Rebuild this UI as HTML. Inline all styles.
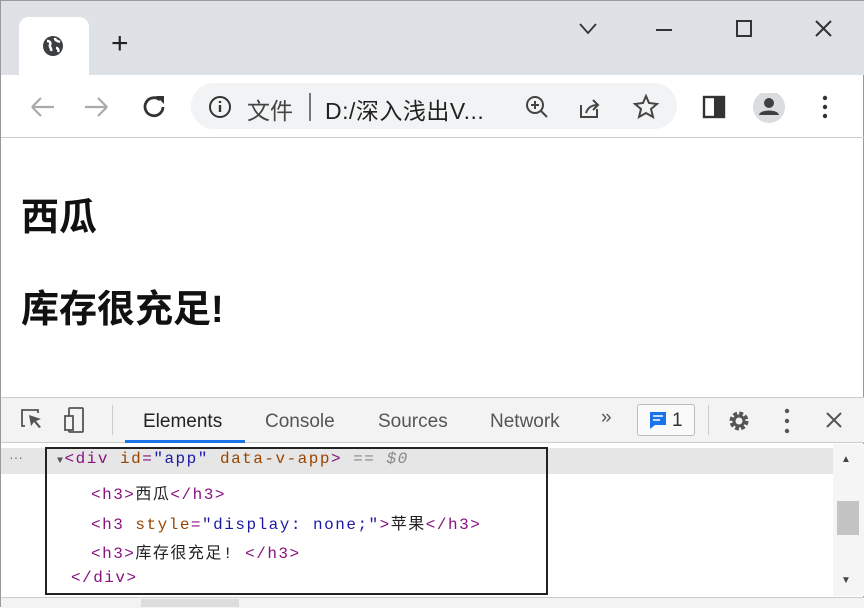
<!DOCTYPE html><html><head><meta charset="utf-8"><style>
*{margin:0;padding:0;box-sizing:border-box}
body{width:864px;height:607px;overflow:hidden;background:#fff;font-family:"Liberation Sans","Noto Sans CJK SC",sans-serif;position:relative;border:1px solid #999}
.a{position:absolute}
.m{font-family:"Liberation Mono","Noto Sans CJK SC",monospace;font-size:16px;letter-spacing:1.5px;color:#222}
.t{color:#881280}.at{color:#994500}.v{color:#1a1aa6}
.tb{font-size:19px;color:#555}
</style></head><body>
<div class="a" style="left:0;top:0;width:864px;height:74px;background:#dee1e6"></div>
<div class="a" style="left:18px;top:16px;width:70px;height:60px;background:#fff;border-radius:10px 10px 0 0"></div>
<svg class="a" style="left:40px;top:33px" width="24" height="24" viewBox="0 0 24 24"><circle cx="12" cy="12" r="10" fill="#3c4043"/><path d="M6 7c3 0 4 2 3 4s2 3 1 6M14 4c0 3 3 3 5 4M15 14c2 0 3 2 2 4" stroke="#fff" stroke-width="2.5" fill="none"/></svg>
<div class="a" style="left:110px;top:26px;font-size:30px;color:#222">+</div>
<svg class="a" style="left:576px;top:18px" width="264" height="20"><path d="M3 5l8 9 8-9" stroke="#333" stroke-width="1.8" fill="none"/><path d="M79 11h16" stroke="#333" stroke-width="2"/><rect x="160" y="2" width="14" height="15" stroke="#333" stroke-width="2" fill="none"/><path d="M239 2l15 15M254 2l-15 15" stroke="#333" stroke-width="2"/></svg>
<svg class="a" style="left:26px;top:92px" width="150" height="28"><path d="M5 14h22M5 14l9-9M5 14l9 9" stroke="#aaa" stroke-width="2.2" fill="none"/><path d="M58 14h22M80 14l-9-9M80 14l-9 9" stroke="#aaa" stroke-width="2.2" fill="none"/><path d="M133 7a9 9 0 1 0 3 7" stroke="#333" stroke-width="2.8" fill="none"/><path d="M129 3h8v8z" fill="#333"/></svg>
<div class="a" style="left:190px;top:82px;width:486px;height:46px;background:#f1f3f4;border-radius:23px"></div>
<svg class="a" style="left:207px;top:94px" width="24" height="24"><circle cx="12" cy="12" r="10" stroke="#333" stroke-width="2" fill="none"/><path d="M12 10v7M12 6v2" stroke="#333" stroke-width="2.4"/></svg>
<div class="a" style="left:246px;top:91px;font-size:23px;color:#444">文件</div>
<div class="a" style="left:308px;top:92px;width:2px;height:28px;background:#777"></div>
<div class="a" style="left:324px;top:91px;font-size:23px;color:#222;letter-spacing:0.5px">D:/深入浅出V...</div>
<svg class="a" style="left:522px;top:92px" width="140" height="28"><circle cx="12" cy="12" r="8" stroke="#444" stroke-width="2" fill="none"/><path d="M18 18l6 6M8 12h8M12 8v8" stroke="#444" stroke-width="2"/><path d="M58 12v12h16v-8M63 20c2-6 6-8 12-8M70 7l5 5-5 5" stroke="#444" stroke-width="2" fill="none"/><path d="M123 3l3 7 8 1-6 5 2 8-7-4-7 4 2-8-6-5 8-1z" stroke="#444" stroke-width="2" fill="none"/></svg>
<svg class="a" style="left:700px;top:92px" width="140" height="30"><rect x="3" y="4" width="20" height="20" stroke="#333" stroke-width="2.4" fill="none"/><rect x="13" y="4" width="10" height="20" fill="#333"/><circle cx="68" cy="14" r="16" fill="#dadce0"/><circle cx="68" cy="10" r="5" fill="#3c4043"/><path d="M58 22c1-6 19-6 20 0z" fill="#3c4043"/><circle cx="124" cy="5" r="2.2" fill="#333"/><circle cx="124" cy="14" r="2.2" fill="#333"/><circle cx="124" cy="23" r="2.2" fill="#333"/></svg>
<div class="a" style="left:0;top:136px;width:864px;height:1px;background:#ccc"></div>
<div class="a" style="left:20px;top:185px;font-size:38px;font-weight:bold;color:#111">西瓜</div>
<div class="a" style="left:20px;top:277px;font-size:38px;font-weight:bold;color:#111">库存很充足!</div>
<div class="a" style="left:0;top:396px;width:864px;height:46px;background:#f3f3f3;border-top:1px solid #ccc;border-bottom:1px solid #ccc"></div>
<svg class="a" style="left:18px;top:405px" width="80" height="28"><path d="M6 20H3V4h16v3" stroke="#555" stroke-width="1.8" fill="none"/><path d="M10 9l12 4-5 2 5 6-2 1-5-6-3 4z" fill="#555"/><rect x="50" y="2" width="14" height="24" rx="1" stroke="#555" stroke-width="1.8" fill="none"/><rect x="46" y="10" width="8" height="14" stroke="#555" stroke-width="1.8" fill="#f3f3f3"/></svg>
<div class="a" style="left:111px;top:404px;width:1px;height:30px;background:#ccc"></div>
<div class="a tb" style="left:142px;top:410px;color:#222">Elements</div>
<div class="a" style="left:124px;top:439px;width:120px;height:3px;background:#1a73e8"></div>
<div class="a tb" style="left:264px;top:410px">Console</div>
<div class="a tb" style="left:377px;top:410px">Sources</div>
<div class="a tb" style="left:489px;top:410px">Network</div>
<div class="a tb" style="left:600px;top:406px">»</div>
<div class="a" style="left:636px;top:403px;width:58px;height:32px;border:1px solid #bbb;border-radius:3px;background:#fafafa"></div>
<svg class="a" style="left:648px;top:410px" width="18" height="20"><path d="M1 1h16v13H6l-5 4z" fill="#1a73e8"/><path d="M4 5h10M4 9h7" stroke="#fff" stroke-width="1.5"/></svg>
<div class="a tb" style="left:671px;top:409px;color:#333">1</div>
<div class="a" style="left:707px;top:404px;width:1px;height:30px;background:#ccc"></div>
<svg class="a" style="left:724px;top:406px" width="130" height="28"><circle cx="14" cy="14" r="7" stroke="#555" stroke-width="5" fill="none" stroke-dasharray="3.5 2"/><circle cx="14" cy="14" r="5" stroke="#555" stroke-width="3" fill="none"/><circle cx="62" cy="4" r="2.2" fill="#555"/><circle cx="62" cy="14" r="2.2" fill="#555"/><circle cx="62" cy="24" r="2.2" fill="#555"/><path d="M102 6l14 14M116 6l-14 14" stroke="#555" stroke-width="2"/></svg>
<div class="a" style="left:0;top:447px;width:832px;height:26px;background:#e6e6e6"></div>
<div class="a" style="left:8px;top:448px;font-size:14px;color:#777">···</div>
<div class="a m" style="left:56px;top:449px"><span style="font-size:10px;color:#555">▼</span><span class="t">&lt;div </span><span class="at">id</span><span class="t">=</span><span class="v">"app"</span> <span class="at">data-v-app</span><span class="t">&gt;</span> <i style="color:#888">== $0</i></div>
<div class="a m" style="left:90px;top:479px"><span class="t">&lt;h3&gt;</span>西瓜<span class="t">&lt;/h3&gt;</span></div>
<div class="a m" style="left:90px;top:509px"><span class="t">&lt;h3 </span><span class="at">style</span><span class="t">=</span><span class="v">"display: none;"</span><span class="t">&gt;</span>苹果<span class="t">&lt;/h3&gt;</span></div>
<div class="a m" style="left:90px;top:538px"><span class="t">&lt;h3&gt;</span>库存很充足! <span class="t">&lt;/h3&gt;</span></div>
<div class="a m" style="left:70px;top:568px"><span class="t">&lt;/div&gt;</span></div>
<div class="a" style="left:44px;top:446px;width:503px;height:148px;border:2.5px solid #222"></div>
<div class="a" style="left:832px;top:443px;width:31px;height:152px;background:#f5f5f5"></div>
<div class="a" style="left:840px;top:453px;font-size:10px;color:#444">▲</div>
<div class="a" style="left:836px;top:500px;width:22px;height:34px;background:#c4c4c4"></div>
<div class="a" style="left:840px;top:574px;font-size:10px;color:#444">▼</div>
<div class="a" style="left:0;top:596px;width:864px;height:11px;background:#f3f3f3;border-top:1px solid #ccc"></div>
<div class="a" style="left:140px;top:598px;width:98px;height:8px;background:#ddd"></div>
</body></html>
